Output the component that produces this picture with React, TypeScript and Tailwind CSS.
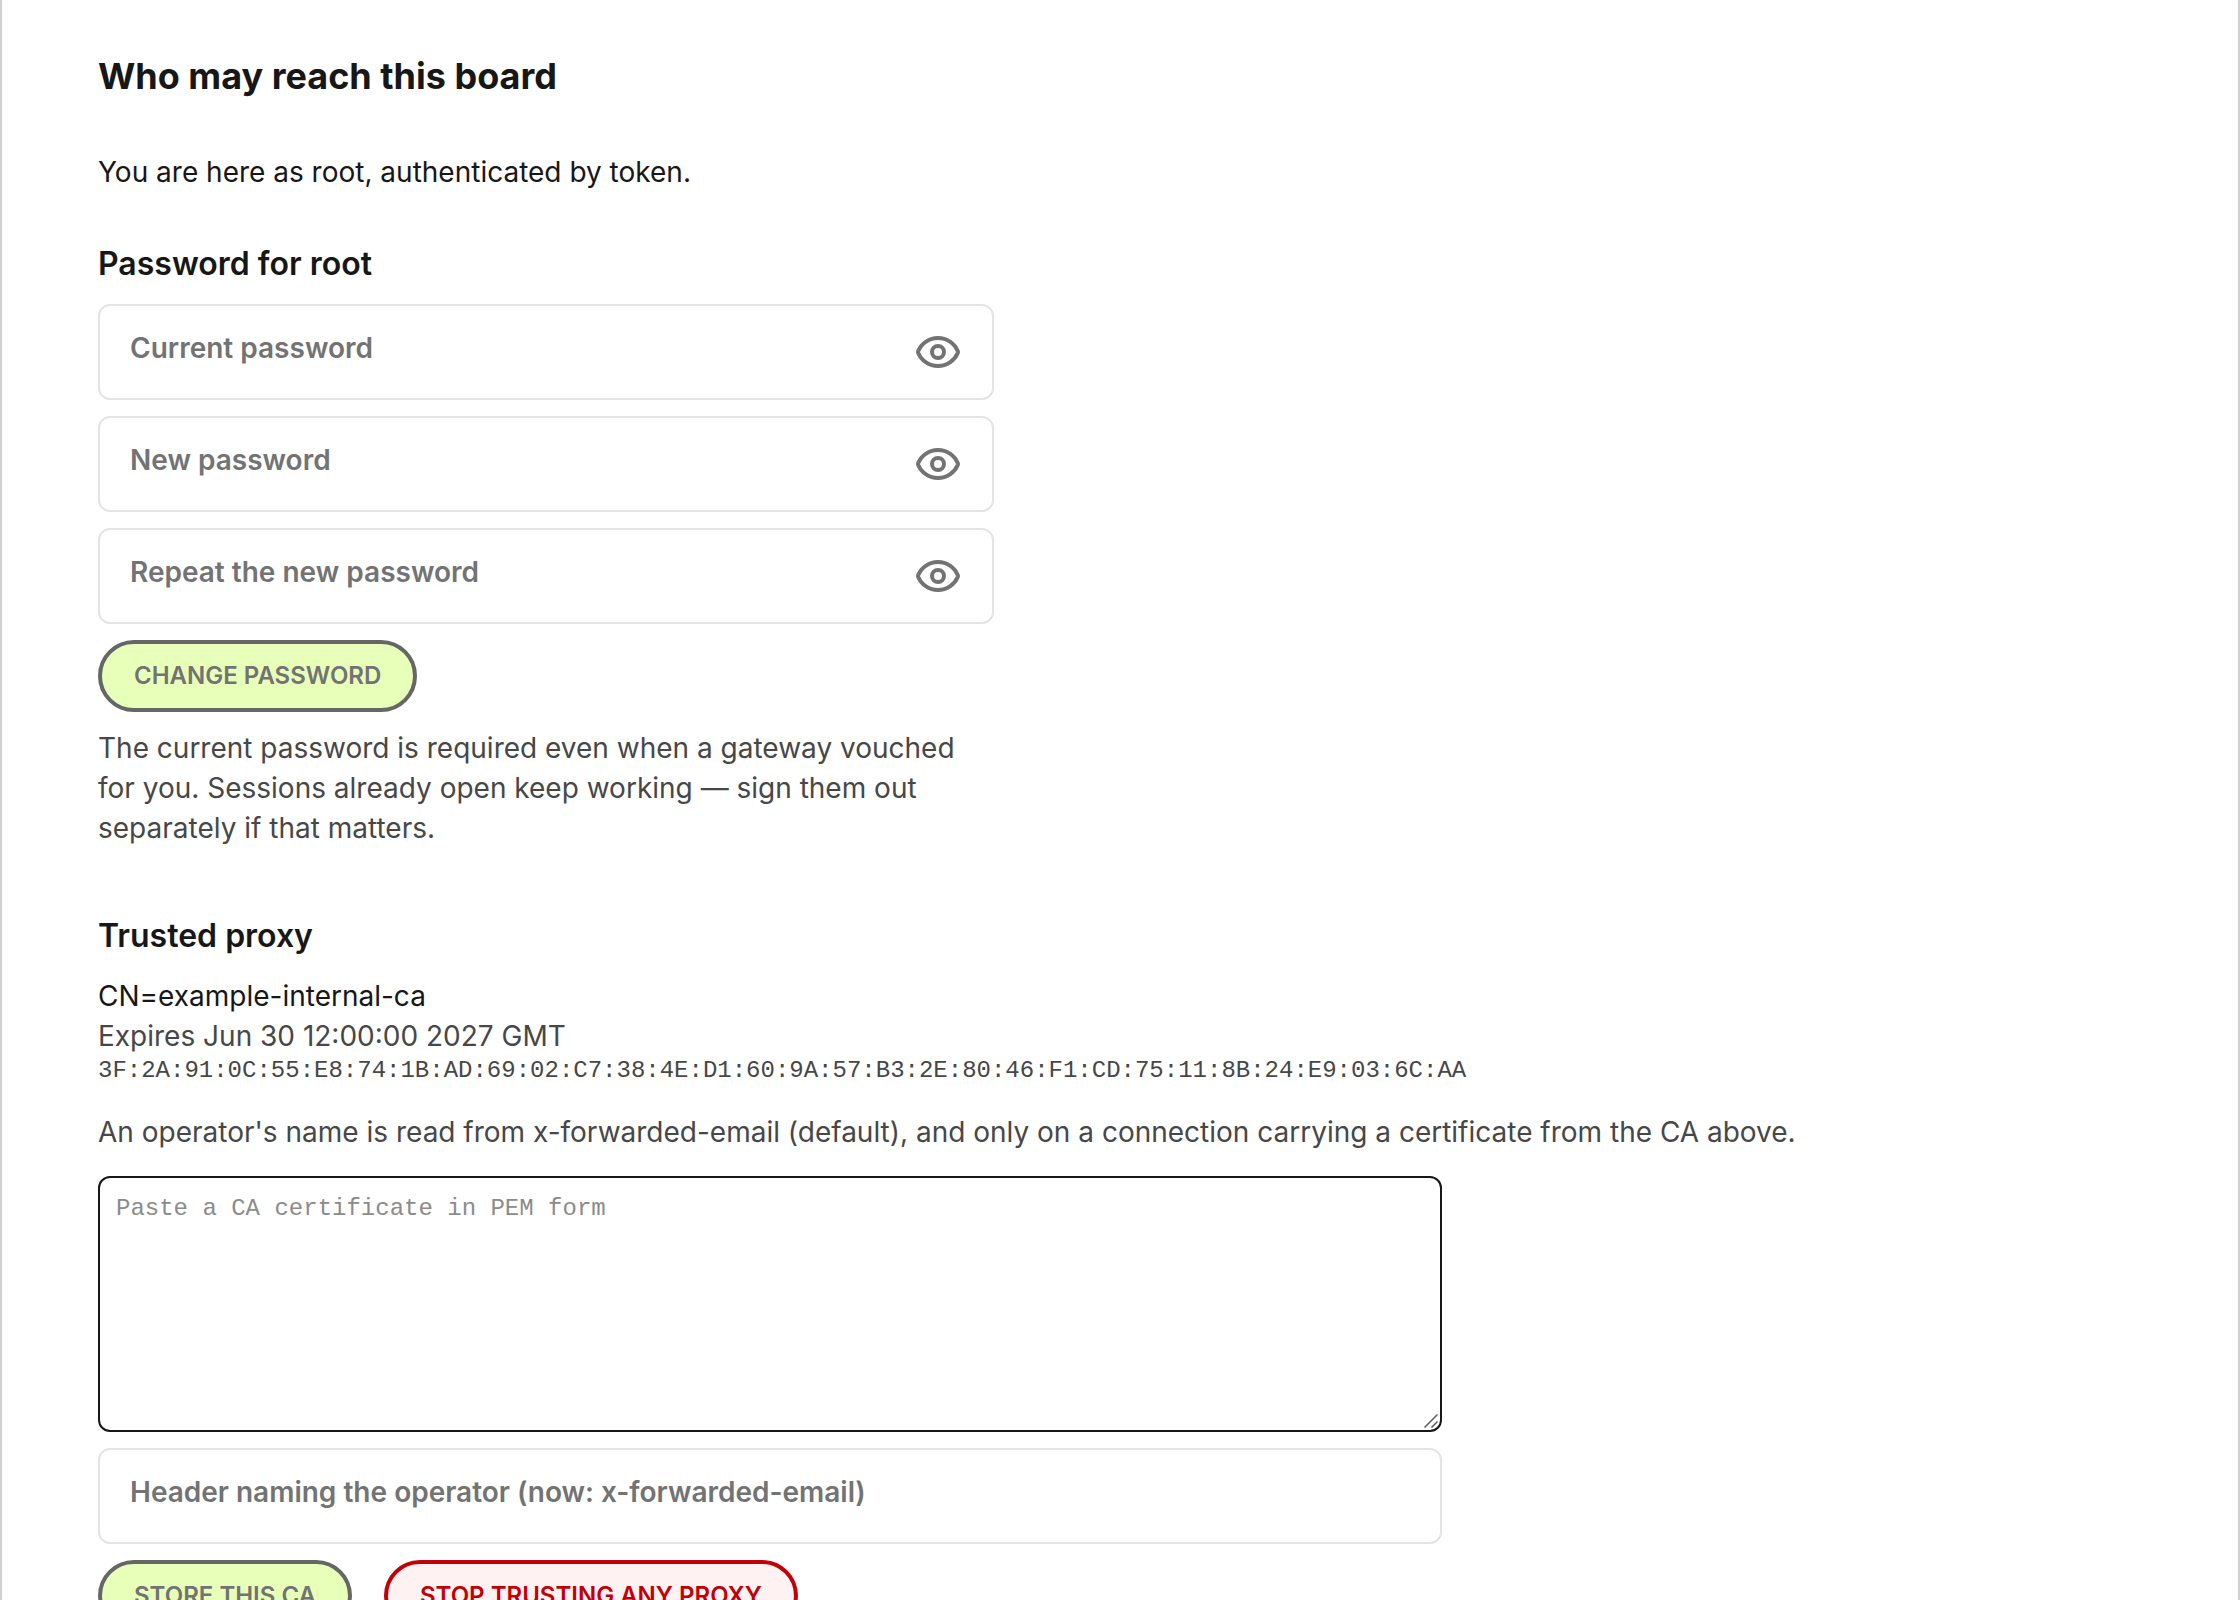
import * as React from "react";
import { Eye, EyeOff } from "lucide-react";

const passwordFields = [
  { id: "current-password", label: "Current password" },
  { id: "new-password", label: "New password" },
  { id: "repeat-password", label: "Repeat the new password" },
];

const fingerprint =
  "3F:2A:91:0C:55:E8:74:1B:AD:69:02:C7:38:4E:D1:60:9A:57:B3:2E:80:46:F1:CD:75:11:8B:24:E9:03:6C:AA";

const fieldClass =
  "block w-full h-24 rounded-xl border-2 border-[#e4e4e4] bg-white pl-[30px] pb-2 text-[28px] font-semibold text-[#171717] placeholder:text-[#737373] placeholder:opacity-100";

const pillClass =
  "h-[72px] rounded-full border-4 px-8 text-2xl font-semibold uppercase whitespace-nowrap";

const PasswordField = ({ id, label }: { id: string; label: string }) => {
  const [visible, setVisible] = React.useState(false);
  return (
    <div className="relative">
      <input
        id={id}
        type={visible ? "text" : "password"}
        aria-label={label}
        placeholder={label}
        className={`${fieldClass} pr-24`}
      />
      <button
        type="button"
        aria-label={visible ? "Hide password" : "Show password"}
        onClick={() => setVisible(!visible)}
        className="absolute inset-y-0 right-8 flex items-center text-[#737373]"
      >
        {visible ? <EyeOff size={48} /> : <Eye size={48} />}
      </button>
    </div>
  );
};

const SectionTitle = ({ children }: { children: React.ReactNode }) => (
  <h2 className="mb-4 text-[32px] leading-12 font-semibold">{children}</h2>
);

const App = () => {
  return (
    <main className="h-screen overflow-y-auto [scrollbar-width:none] border-x-2 border-[#d0d0d0] bg-white px-24 py-12 font-['Inter',sans-serif] text-[28px] leading-10 text-[#171717]">
      <h1 className="mb-12 text-4xl leading-14 font-bold">Who may reach this board</h1>
      <p className="mb-12">You are here as root, authenticated by token.</p>

      {/* Password */}
      <section className="mb-16 max-w-4xl">
        <SectionTitle>Password for root</SectionTitle>
        <form className="flex flex-col items-start gap-4" onSubmit={(e) => e.preventDefault()}>
          <div className="flex w-full flex-col gap-4">
            {passwordFields.map((field) => (
              <PasswordField key={field.id} {...field} />
            ))}
          </div>
          <button
            type="submit"
            disabled
            className={`${pillClass} border-[#666666] bg-[#e8ffb9] text-[#737373]`}
          >
            Change password
          </button>
          <p className="text-[#474747]">
            The current password is required even when a gateway vouched for you. Sessions already
            open keep working — sign them out separately if that matters.
          </p>
        </form>
      </section>

      {/* Proxy CA */}
      <section>
        <SectionTitle>Trusted proxy</SectionTitle>
        <p>CN=example-internal-ca</p>
        <p className="text-[#474747]">Expires Jun 30 12:00:00 2027 GMT</p>
        <p className="mb-[26px] font-['Liberation_Mono',monospace] text-2xl leading-[30px] text-[#474747]">
          {fingerprint}
        </p>
        <p className="mb-6 text-[#474747]">
          An operator's name is read from x-forwarded-email (default), and only on a connection
          carrying a certificate from the CA above.
        </p>
        <form
          className="flex max-w-[1344px] flex-col gap-4"
          onSubmit={(e) => e.preventDefault()}
        >
          <div className="relative">
            <textarea
              id="ca-pem"
              aria-label="CA certificate"
              placeholder="Paste a CA certificate in PEM form"
              className="block h-64 w-full resize-y rounded-xl border-2 border-[#171717] bg-white p-4 font-['Liberation_Mono',monospace] text-2xl leading-[30px] placeholder:text-[#8b8b8b] placeholder:opacity-100 [&::-webkit-resizer]:hidden"
            />
            <svg
              viewBox="0 0 16 16"
              className="pointer-events-none absolute right-1 bottom-1 size-4"
              fill="none"
              stroke="#5c5c5c"
              strokeWidth="1.5"
              aria-hidden="true"
            >
              <path d="M2.5 15.5 15.5 2.5M9.5 15.5l6-6" />
            </svg>
          </div>
          <input
            id="operator-header"
            type="text"
            aria-label="Header naming the operator"
            placeholder="Header naming the operator (now: x-forwarded-email)"
            className={`${fieldClass} pr-7`}
          />
          <div className="flex gap-8">
            <button
              type="submit"
              disabled
              className={`${pillClass} border-[#666666] bg-[#e8ffb9] text-[#737373]`}
            >
              Store this CA
            </button>
            <button
              type="button"
              className={`${pillClass} border-[#c10007] bg-[#fef2f2] text-[#c10007]`}
            >
              Stop trusting any proxy
            </button>
          </div>
        </form>
      </section>
    </main>
  );
};

export default App;
